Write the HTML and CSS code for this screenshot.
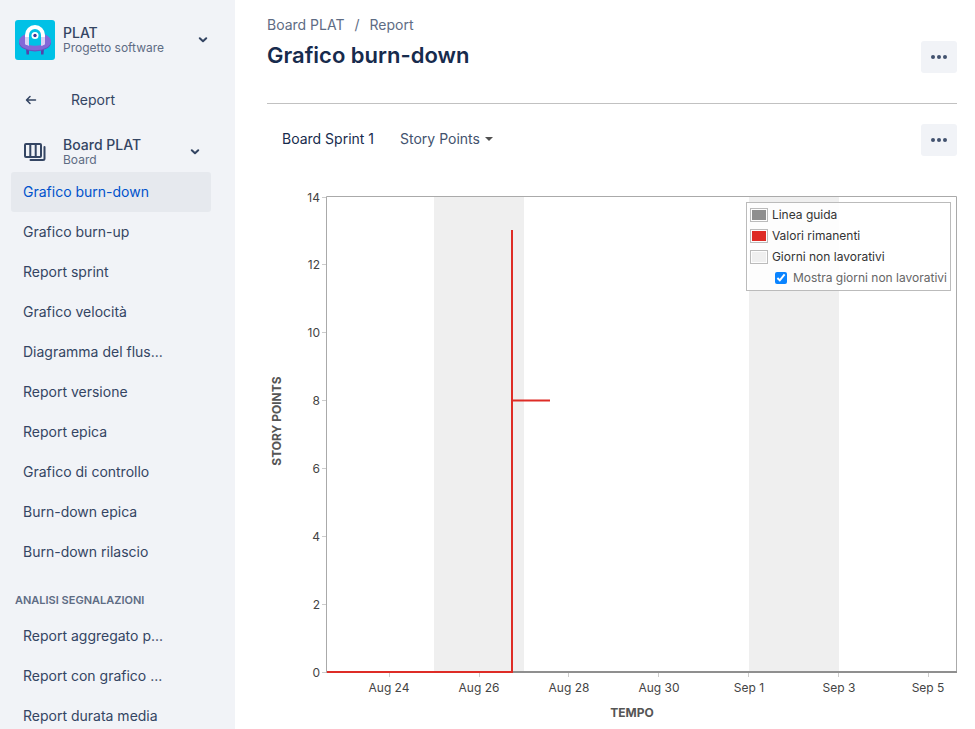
FILE: index.html
```html
<!DOCTYPE html>
<html lang="it">
<head>
<meta charset="utf-8">
<meta name="viewport" content="width=device-width, initial-scale=1">
<title>Grafico burn-down</title>
<link rel="stylesheet" href="styles.css">
</head>
<body>
<div class="app">
  <aside class="sidebar">
    <header class="project">
      <svg class="avatar" viewBox="0 0 40 40" aria-hidden="true">
        <rect width="40" height="40" rx="3" fill="#00c1e6"/>
        <path d="M11 28h3v6.500h-2.500zM26 28h3l-.5 6.500H26z" fill="#5243aa"/>
        <ellipse cx="20" cy="22.500" rx="16" ry="9" fill="#6554c0"/>
        <ellipse cx="20" cy="21.300" rx="16" ry="9" fill="#8368d8"/>
        <path d="M10 24V15a10 10 0 0 1 20 0v9q-2 1.500-4 1.500V15h-12v10.500q-2-.3-4-1.500z" fill="#fff"/>
        <path d="M10 17h4v8.500q-2-.3-4-1.500zM26 17h4v7q-2 1.500-4 1.500z" fill="#d9d0f4"/>
        <path d="M14 25V15a6 6 0 0 1 12 0v10q-6 1.500-12 0z" fill="#00c1e6"/>
        <circle cx="20" cy="15.500" r="3.500" fill="#fff"/>
        <circle cx="20" cy="15.500" r="1.700" fill="#403294"/>
      </svg>
      <div class="names"><strong>PLAT</strong><span>Progetto software</span></div>
      <button class="toggle" type="button" aria-label="Cambia progetto">
        <svg width="10" height="6" viewBox="0 0 10 6"><path d="M1.800 1.200 5 4.200l3.200-3" /></svg>
      </button>
    </header>
    <a class="back" href="#">
      <svg width="12" height="10" viewBox="0 0 12 10"><path d="M10.500 5H2M5 1.500 1.500 5 5 8.500"/></svg>
      <span>Report</span>
    </a>
    <div class="board">
      <svg class="board-icon" width="24" height="20" viewBox="0 0 24 20" aria-hidden="true">
        <rect x="2" y="2" width="16" height="13" rx="1"/><path d="M7.300 2v13M12.700 2v13M21.500 5v11.500a1.500 1.500 0 0 1-1.500 1.500H7.500"/>
      </svg>
      <div class="names"><strong>Board PLAT</strong><span>Board</span></div>
      <button class="toggle" type="button" aria-label="Cambia board">
        <svg width="10" height="6" viewBox="0 0 10 6"><path d="M1.800 1.200 5 4.200l3.200-3" /></svg>
      </button>
    </div>
    <nav class="links">
      <a class="active" href="#" aria-current="page">Grafico burn-down</a>
      <a href="#">Grafico burn-up</a>
      <a href="#">Report sprint</a>
      <a href="#">Grafico velocità</a>
      <a href="#">Diagramma del flus...</a>
      <a href="#">Report versione</a>
      <a href="#">Report epica</a>
      <a href="#">Grafico di controllo</a>
      <a href="#">Burn-down epica</a>
      <a href="#">Burn-down rilascio</a>
    </nav>
    <h2>ANALISI SEGNALAZIONI</h2>
    <nav class="links">
      <a href="#">Report aggregato p...</a>
      <a href="#">Report con grafico ...</a>
      <a href="#">Report durata media</a>
    </nav>
  </aside>

  <main class="content">
    <header class="page-head">
      <div>
        <nav class="crumbs"><a href="#">Board PLAT</a><span>/</span><a href="#">Report</a></nav>
        <h1>Grafico burn-down</h1>
      </div>
      <button class="more" type="button" aria-label="Altre azioni"><svg width="16" height="4" viewBox="0 0 16 4"><circle cx="2" cy="2" r="2"/><circle cx="8" cy="2" r="2"/><circle cx="14" cy="2" r="2"/></svg></button>
    </header>

    <div class="toolbar">
      <span class="sprint">Board Sprint 1</span>
      <label class="estimate">
        <select aria-label="Statistica di stima"><option>Story Points</option></select>
        <svg width="8" height="4" viewBox="0 0 8 4"><path d="M0 0h8L4 4z"/></svg>
      </label>
      <button class="more" type="button" aria-label="Opzioni del report"><svg width="16" height="4" viewBox="0 0 16 4"><circle cx="2" cy="2" r="2"/><circle cx="8" cy="2" r="2"/><circle cx="14" cy="2" r="2"/></svg></button>
    </div>

    <section class="chart">
      <svg class="plot" viewBox="0 0 690 538" role="img" aria-label="Grafico burn-down">
        <g class="weekend"><rect x="167" y="11" width="90" height="475"/><rect x="482" y="11" width="90" height="475"/></g>
        <path class="ticks" d="M55 11.500h4M55 78.500h4M55 146.500h4M55 214.500h4M55 282.500h4M55 350.500h4M55 418.500h4M55 486.500h4M122.500 487v4M212.500 487v4M301.500 487v4M391.500 487v4M481.500 487v4M571.500 487v4M661.500 487v4"/>
        <path class="frame" d="M59.500 487V10.500h630V487"/>
        <path class="guide" d="M60 486h630"/>
        <path class="remaining" d="M60 486h185V44M245 214.500h38"/>
        <g class="y-labels">
          <text x="53" y="16">14</text><text x="53" y="83">12</text><text x="53" y="151">10</text><text x="53" y="219">8</text>
          <text x="53" y="287">6</text><text x="53" y="355">4</text><text x="53" y="423">2</text><text x="53" y="491">0</text>
        </g>
        <g class="x-labels">
          <text x="122" y="506">Aug 24</text><text x="212" y="506">Aug 26</text><text x="302" y="506">Aug 28</text><text x="392" y="506">Aug 30</text>
          <text x="482" y="506">Sep 1</text><text x="572" y="506">Sep 3</text><text x="661" y="506">Sep 5</text>
        </g>
        <text class="axis-title" x="365" y="531">TEMPO</text>
        <text class="axis-title" transform="translate(14 235) rotate(-90)">STORY POINTS</text>
      </svg>
      <div class="legend">
        <ul>
          <li><i class="swatch gray"></i>Linea guida</li>
          <li><i class="swatch red"></i>Valori rimanenti</li>
          <li><i class="swatch light"></i>Giorni non lavorativi</li>
        </ul>
        <label><input type="checkbox" checked>Mostra giorni non lavorativi</label>
      </div>
    </section>
  </main>
</div>
</body>
</html>
```
FILE: styles.css
```css
* { box-sizing: border-box; }
body {
  margin: 0;
  background: #fff;
  color: #172b4d;
  font: 14px/20px Inter, "Liberation Sans", sans-serif;
}
a { color: inherit; text-decoration: none; }
button, select { font: inherit; color: inherit; border: 0; padding: 0; background: none; }
svg { display: block; }

.app { display: flex; height: 100vh; }
.sidebar {
  flex: 0 0 235px;
  overflow: hidden;
  background: #f1f3f7;
  color: #344563;
}
.project { display: flex; align-items: center; height: 80px; padding: 0 24px 0 15px; }
.avatar { width: 40px; height: 40px; }
.names { flex: 1; margin-left: 8px; }
.names strong, .names span { display: block; }
.names strong { font-weight: 500; line-height: 16px; }
.names span { font-size: 12px; line-height: 14px; color: #5e6c84; }
.toggle { display: grid; place-items: center; width: 16px; height: 24px; }
.toggle path, .back path { fill: none; stroke: #344563; stroke-width: 2; stroke-linecap: round; stroke-linejoin: round; }
.back { display: flex; align-items: center; gap: 34px; height: 40px; padding-left: 25px; }
.back path { stroke-width: 1.5px; }
.board { display: flex; align-items: center; height: 52px; padding: 12px 32px 0 23px; }
.board .names { margin-left: 16px; }
.board-icon { fill: none; stroke: #344563; stroke-width: 2; stroke-linecap: round; }
.links a {
  display: block;
  height: 40px;
  margin: 0 24px 0 11px;
  padding: 0 12px;
  border-radius: 3px;
  line-height: 40px;
  white-space: nowrap;
}
.links .active { background: #e6e9ee; color: #0052cc; }
.sidebar h2 { margin: 20px 15px 8px; font-size: 11px; line-height: 16px; font-weight: 600; color: #5e6c84; }

.content { flex: 1; min-width: 0; padding: 14px 18px 0 32px; }
.page-head {
  display: flex;
  justify-content: space-between;
  align-items: flex-end;
  height: 90px;
  padding-bottom: 30px;
  border-bottom: 1px solid #c1c1c1;
}
.crumbs { display: flex; gap: 10px; color: #5e6c84; }
h1 { margin: 6px 0 4px; font-size: 22px; line-height: 28px; font-weight: 600; }
.more { display: grid; place-items: center; width: 36px; height: 32px; border-radius: 3px; background: #f1f3f7; }
.more svg { fill: #42526e; }
.toolbar { display: flex; align-items: flex-start; margin-top: 20px; line-height: 30px; }
.sprint { margin-left: 15px; }
.estimate { display: flex; align-items: center; gap: 5px; margin: 0 auto 0 26px; color: #42526e; }
.estimate select { appearance: none; }
.estimate svg { fill: #505050; }

.chart { position: relative; margin-top: 30px; }
.plot { width: 100%; height: auto; }
.weekend { fill: #efefef; }
.ticks, .frame, .guide, .remaining { fill: none; }
.ticks { stroke: #ccc; }
.frame { stroke: #aaa; }
.guide { stroke: #8f8f8f; stroke-width: 2; }
.remaining { stroke: #de2c26; stroke-width: 2; }
.plot text { font-size: 12px; fill: #444; text-anchor: middle; }
.plot .y-labels text { text-anchor: end; }
.plot .axis-title { font-weight: 700; fill: #555; }
.legend {
  position: absolute;
  top: 16px;
  right: 6px;
  padding: 1px 3px 2px;
  border: 1px solid #bbb;
  background: rgba(255, 255, 255, .85);
  color: #333;
  font-size: 12px;
  line-height: 21px;
}
.legend ul { margin: 0; padding: 0; list-style: none; }
.legend li, .legend label { display: flex; align-items: center; gap: 4px; }
.legend label { gap: 6px; padding-left: 25px; color: #666; }
.legend input { width: 12px; height: 12px; margin: 0; accent-color: #0a84ff; }
.swatch { width: 18px; height: 14px; padding: 1px; border: 1px solid #bbb; background-clip: content-box; }
.gray { background-color: #8f8f8f; }
.red { background-color: #de2c26; }
.light { background-color: #efefef; }
```
